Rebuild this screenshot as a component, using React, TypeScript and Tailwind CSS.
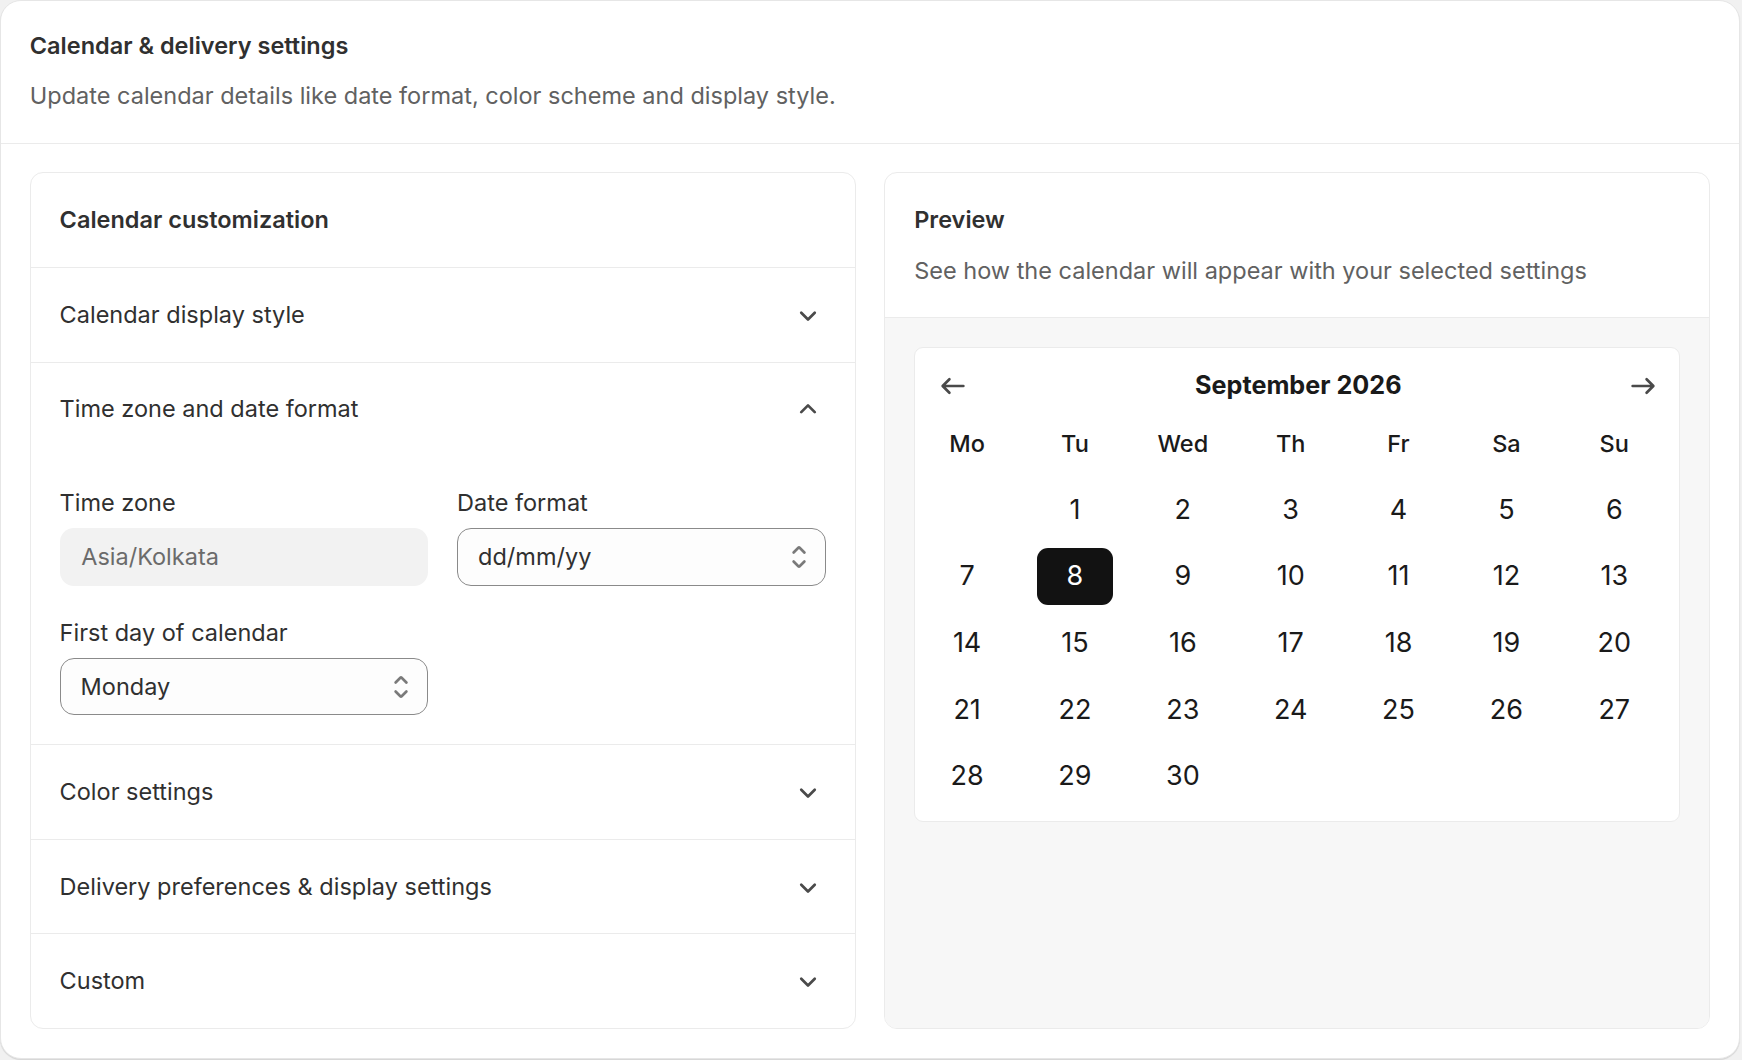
import React from "react";

const ChevronDown = () => (
  <svg viewBox="0 0 20 20" className="w-[36px] h-[36px]" fill="none">
    <path d="M6.25 8.75 10 12.5l3.75-3.75" stroke="#4a4a4a" strokeWidth="1.5" strokeLinecap="round" strokeLinejoin="round" />
  </svg>
);

const ChevronUp = () => (
  <svg viewBox="0 0 20 20" className="w-[36px] h-[36px]" fill="none">
    <path d="M6.25 11.75 10 8l3.75 3.75" stroke="#4a4a4a" strokeWidth="1.5" strokeLinecap="round" strokeLinejoin="round" />
  </svg>
);

const SelectIcon = () => (
  <svg viewBox="0 0 20 20" className="w-[36px] h-[36px]" fill="#7a7a7a">
    <path d="M10.884 4.323a1.25 1.25 0 0 0-1.768 0l-2.646 2.647a.75.75 0 0 0 1.06 1.06l2.47-2.47 2.47 2.47a.75.75 0 1 0 1.06-1.06l-2.646-2.647Z" />
    <path d="m13.53 13.03-2.646 2.647a1.25 1.25 0 0 1-1.768 0l-2.646-2.647a.75.75 0 0 1 1.06-1.06l2.47 2.47 2.47-2.47a.75.75 0 0 1 1.06 1.06Z" />
  </svg>
);

const ArrowLeft = () => (
  <svg viewBox="0 0 20 20" className="w-[36px] h-[36px]" fill="none">
    <path d="M15.75 10H4.5M8 6.25 4.25 10 8 13.75" stroke="#4a4a4a" strokeWidth="1.5" strokeLinecap="round" strokeLinejoin="round" />
  </svg>
);

const ArrowRight = () => (
  <svg viewBox="0 0 20 20" className="w-[36px] h-[36px]" fill="none">
    <path d="M4.25 10H15.5M12 6.25 15.75 10 12 13.75" stroke="#4a4a4a" strokeWidth="1.5" strokeLinecap="round" strokeLinejoin="round" />
  </svg>
);

function Row({ label }: { label: string }) {
  return (
    <div className="border-t border-[#ebebeb] px-[28.8px] py-[28.8px] flex items-center justify-between">
      <span className="text-[23.5px] leading-[36px] text-[#303030]">{label}</span>
      <ChevronDown />
    </div>
  );
}

function SelectBox({ value }: { value: string }) {
  return (
    <div className="h-[57.6px] rounded-[14px] border-[1.5px] border-[#8a8a8a] bg-[#fdfdfd] flex items-center justify-between pl-[20px] pr-[8px]">
      <span className="text-[23.5px] leading-[36px] text-[#303030]">{value}</span>
      <SelectIcon />
    </div>
  );
}

const weekdays = ["Mo", "Tu", "Wed", "Th", "Fr", "Sa", "Su"];

export default function App() {
  const days: (number | null)[] = [null];
  for (let i = 1; i <= 30; i++) days.push(i);
  while (days.length % 7 !== 0) days.push(null);

  return (
    <div className="min-h-screen bg-[#f1f1f1]" style={{ fontFamily: "Inter, 'Noto Sans', sans-serif" }}>
      <div className="mr-[2px] bg-white rounded-[21px] border border-[#e6e6e6] shadow-[0_1px_1px_rgba(0,0,0,0.12)]">
        <div className="px-[28.8px] pt-[28.8px] pb-[28.8px] border-b border-[#ebebeb]">
          <div className="text-[23.5px] leading-[31px] font-semibold text-[#303030]">Calendar &amp; delivery settings</div>
          <div className="mt-[17px] text-[23.5px] leading-[36px] text-[#616161]">
            Update calendar details like date format, color scheme and display style.
          </div>
        </div>
        <div className="p-[28.8px] grid grid-cols-2 gap-[28.8px]">
          {/* Left card */}
          <div className="rounded-[13px] border border-[#ebebeb] bg-white overflow-hidden">
            <div className="px-[28.8px] py-[28.8px]">
              <div className="text-[23.5px] leading-[36px] font-semibold text-[#303030]">Calendar customization</div>
            </div>
            <Row label="Calendar display style" />
            <div className="border-t border-[#ebebeb]">
              <div className="px-[28.8px] py-[28.8px] flex items-center justify-between">
                <span className="text-[23.5px] leading-[36px] text-[#303030]">Time zone and date format</span>
                <ChevronUp />
              </div>
              <div className="px-[28.8px] pt-[28.8px] pb-[28.8px] grid grid-cols-2 gap-x-[28.8px] gap-y-[28.8px]">
                <div>
                  <div className="text-[23.5px] leading-[36px] text-[#303030] mb-[7.2px]">Time zone</div>
                  <div className="h-[57.6px] rounded-[14px] bg-[#f2f2f2] flex items-center pl-[21.6px]">
                    <span className="text-[23.5px] leading-[36px] text-[#6b6b6b]">Asia/Kolkata</span>
                  </div>
                </div>
                <div>
                  <div className="text-[23.5px] leading-[36px] text-[#303030] mb-[7.2px]">Date format</div>
                  <SelectBox value="dd/mm/yy" />
                </div>
                <div>
                  <div className="text-[23.5px] leading-[36px] text-[#303030] mb-[7.2px]">First day of calendar</div>
                  <SelectBox value="Monday" />
                </div>
              </div>
            </div>
            <Row label="Color settings" />
            <Row label="Delivery preferences & display settings" />
            <Row label="Custom" />
          </div>

          {/* Right card */}
          <div className="rounded-[13px] border border-[#ebebeb] bg-white overflow-hidden flex flex-col">
            <div className="px-[28.8px] pt-[28.8px] pb-[28.8px] border-b border-[#ebebeb]">
              <div className="text-[23.5px] leading-[36px] font-semibold text-[#303030]">Preview</div>
              <div className="mt-[14.4px] text-[23.5px] leading-[36px] text-[#616161]">
                See how the calendar will appear with your selected settings
              </div>
            </div>
            <div className="flex-1 bg-[#f7f7f7] p-[28.8px]">
              <div className="bg-white rounded-[9px] border border-[#ebebeb] pt-[16px] pb-[11px]">
                <div className="h-[43px] pl-[20px] pr-[18px] flex items-center justify-between">
                  <ArrowLeft />
                  <span className="text-[25.2px] font-bold text-[#1a1a1a]">September 2026</span>
                  <ArrowRight />
                </div>
                <div className="mt-[3px] -ml-[2px] w-[755px] grid grid-cols-7">
                  {weekdays.map((w) => (
                    <div key={w} className="h-[66.6px] flex items-center justify-center text-[23.5px] font-medium text-[#1a1a1a]">
                      {w}
                    </div>
                  ))}
                  {days.map((d, i) => (
                    <div key={i} className="h-[66.6px] flex items-center justify-center">
                      {d === 8 ? (
                        <div className="w-[75.6px] h-[57.6px] rounded-[11px] bg-[#121212] flex items-center justify-center text-[27px] text-white">
                          8
                        </div>
                      ) : (
                        <span className="text-[27px] text-[#1a1a1a]">{d ?? ""}</span>
                      )}
                    </div>
                  ))}
                </div>
              </div>
            </div>
          </div>
        </div>
      </div>
    </div>
  );
}
